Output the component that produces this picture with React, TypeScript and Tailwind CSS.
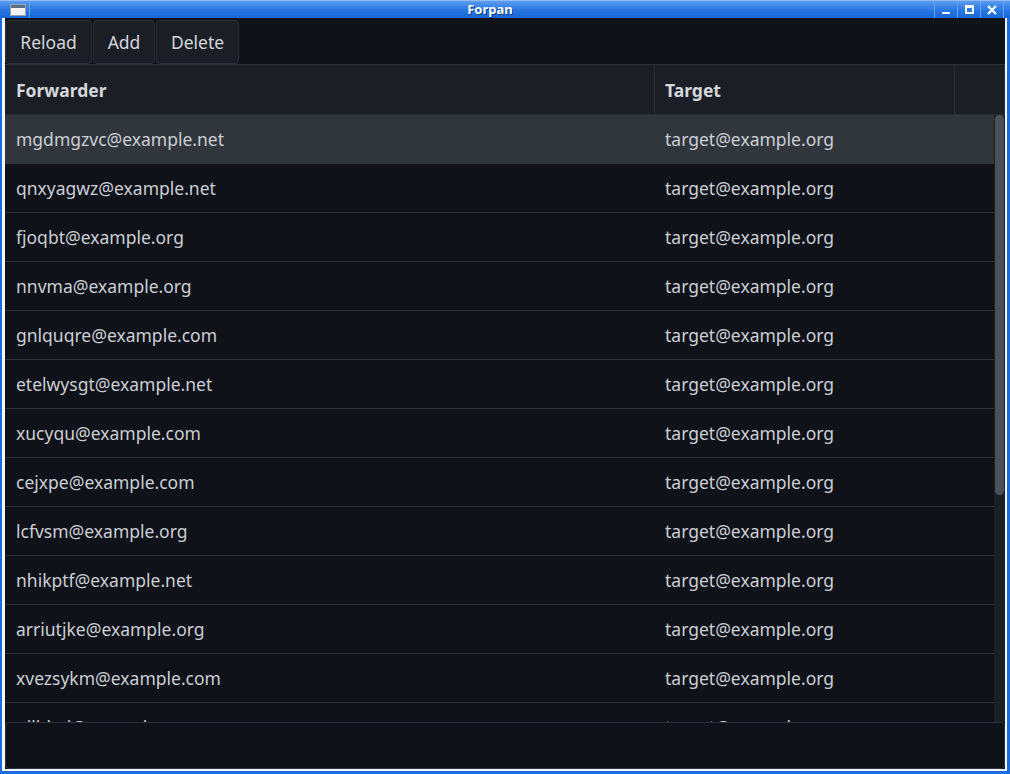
import React from "react";

const rows = [
  "mgdmgzvc@example.net",
  "qnxyagwz@example.net",
  "fjoqbt@example.org",
  "nnvma@example.org",
  "gnlquqre@example.com",
  "etelwysgt@example.net",
  "xucyqu@example.com",
  "cejxpe@example.com",
  "lcfvsm@example.org",
  "nhikptf@example.net",
  "arriutjke@example.org",
  "xvezsykm@example.com",
  "ullbkql@example.com",
];

function TitleBar() {
  return (
    <div className="relative h-[18px] flex items-center bg-gradient-to-b from-[#5b9cf0] via-[#2a79e3] to-[#1465d6] border-t border-[#8fbcf5]">
      {/* window icon */}
      <div className="ml-[10px] w-[16px] h-[12px] bg-[#f2f2f2] border border-[#9aa4b0] flex flex-col">
        <div className="h-[3px] bg-[#5a6e8a]" />
      </div>
      <div className="w-px h-full bg-[#6aa6ee] ml-[3px]" />
      <div className="flex-1 text-center text-white font-bold text-[13px] leading-none [text-shadow:1px_1px_0_#0b3b85] pl-[16px]">
        Forpan
      </div>
      <div className="flex h-full">
        <div className="w-px h-full bg-[#6aa6ee]" />
        <div className="w-[22px] flex items-center justify-center">
          <div className="w-[8px] h-[2px] bg-white mt-[6px]" />
        </div>
        <div className="w-px h-full bg-[#6aa6ee]" />
        <div className="w-[22px] flex items-center justify-center">
          <div className="w-[9px] h-[9px] border-2 border-white border-t-[3px]" />
        </div>
        <div className="w-px h-full bg-[#6aa6ee]" />
        <div className="w-[22px] flex items-center justify-center">
          <svg width="10" height="10" viewBox="0 0 10 10">
            <path d="M1 1 L9 9 M9 1 L1 9" stroke="white" strokeWidth="2.2" />
          </svg>
        </div>
        <div className="w-px h-full bg-[#6aa6ee] mr-[6px]" />
      </div>
    </div>
  );
}

function ToolButton({ label, w }: { label: string; w: string }) {
  return (
    <button
      className={`${w} h-[44px] rounded-[4px] border border-[#2c3038] bg-[#1b1e25] text-[#d3d7dc] text-[17.5px] flex items-center justify-center`}>
      {label}
    </button>
  );
}

export default function App() {
  return (
    <div
      className="w-[1010px] h-[774px] flex flex-col bg-[#1d6cdc] overflow-hidden"
      style={{ fontFamily: '"Noto Sans", "Open Sans", sans-serif' }}>
      <TitleBar />
      <div className="flex-1 flex flex-col ml-[2px] mr-[3px] mb-[3px] border-l-[3px] border-r-[2px] border-b-[2px] border-[#f4f8fe] bg-[#0f1218] min-h-0">
        {/* Toolbar */}
        <div className="h-[46px] flex items-start gap-[1px] pt-[2px] bg-[#0f1218]">
          <ToolButton label="Reload" w="w-[87px]" />
          <ToolButton label="Add" w="w-[62px]" />
          <ToolButton label="Delete" w="w-[83px]" />
        </div>

        {/* Table */}
        <div className="relative flex-1 min-h-0 border-t border-[#2a2e35] overflow-hidden">
          <div className="h-[50px] flex bg-[#1b1e25] border-b border-[#2a2e35] text-[#d3d7dc] text-[17.5px] font-bold">
            <div className="w-[650px] border-r border-[#2a2e35] flex items-center pl-[11px] pt-[1px]">Forwarder</div>
            <div className="w-[300px] border-r border-[#2a2e35] flex items-center pl-[10px] pt-[1px]">Target</div>
            <div className="flex-1 border-r border-[#2a2e35]" />
          </div>
          <div className="relative h-[608px] overflow-hidden">
            <div className="mr-[10px]">
              {rows.map((r, i) => (
                <div
                  key={r}
                  className={`h-[49px] flex items-center pt-[1px] text-[17.5px] text-[#cbcfd5] border-b ${
                    i === 0 ? "bg-[#31363d] border-[#31363d]" : "bg-[#0f1218] border-[#2a2e35]"
                  }`}>
                  <div className="w-[650px] pl-[11px]">{r}</div>
                  <div className="pl-[10px]">target@example.org</div>
                </div>
              ))}
            </div>
            {/* scrollbar */}
            <div className="absolute right-0 top-0 bottom-0 w-[11px] bg-[#1c1f26]">
              <div className="mx-[1px] h-[380px] rounded-full bg-[#4c5159]" />
            </div>
          </div>
        </div>

        {/* Bottom bar */}
        <div className="h-[47px] rounded-[4px] border border-[#2c3038] bg-[#0f1218]" />
      </div>
    </div>
  );
}
